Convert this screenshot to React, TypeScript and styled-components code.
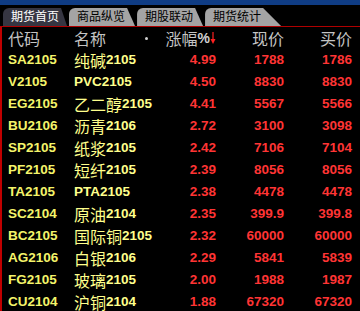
import React from "react";
import styled, { createGlobalStyle } from "styled-components";

const Global = createGlobalStyle`
  html, body { margin: 0; padding: 0; background: #000; }
  #root { width: 360px; height: 311px; overflow: hidden; }
`;

const Screen = styled.div`
  width: 360px;
  height: 311px;
  background: #000;
  display: flex;
  flex-direction: column;
  overflow: hidden;
`;

const TopStrip = styled.div`
  height: 5px;
  background: #0f3c84;
  flex: none;
`;

const TabBar = styled.div`
  height: 22px;
  box-sizing: border-box;
  padding: 3px 0 0 3px;
  display: flex;
  gap: 2px;
  border-bottom: 1px solid #b00000;
  flex: none;
`;

const Tab = styled.div<{ $active?: boolean; $slant: number }>`
  height: 18px;
  box-sizing: border-box;
  padding: 0 ${(p) => p.$slant + 2}px 3px 8px;
  display: flex;
  align-items: center;
  background: ${(p) => (p.$active ? "#363642" : "#a4a4a4")};
  color: ${(p) => (p.$active ? "#ffffff" : "#000000")};
  font-family: "Noto Sans CJK SC", sans-serif;
  font-size: 12px;
  line-height: 12px;
  border-top-left-radius: 6px;
  clip-path: polygon(0 0, calc(100% - ${(p) => p.$slant}px) 0, 100% 100%, 0 100%);
  white-space: nowrap;
`;

const Table = styled.div`
  flex: 1;
  border-left: 2px solid #c00000;
  padding-left: 6px;
  display: grid;
  grid-template-columns: 66px 80px 62px 68px 68px;
  grid-auto-rows: 22px;
  align-items: center;
`;

const HeadCell = styled.div<{ $right?: boolean }>`
  height: 22px;
  font-family: "Noto Sans CJK SC", sans-serif;
  font-size: 16px;
  line-height: 16px;
  color: #c4c4c4;
  display: flex;
  align-items: center;
  justify-content: ${(p) => (p.$right ? "flex-end" : "flex-start")};
  white-space: nowrap;
`;

const NameHead = styled(HeadCell)`
  justify-content: space-between;
  padding-right: 6px;
`;

const Dot = styled.span`
  width: 3px;
  height: 3px;
  border-radius: 50%;
  background: #d0d0d0;
`;

const Pct = styled.span`
  font-family: "Liberation Sans", Arial, sans-serif;
  font-weight: bold;
  font-size: 14px;
  line-height: 14px;
  color: #d0d0d0;
`;

const Cell = styled.div<{ $color: string; $right?: boolean }>`
  height: 22px;
  font-family: "Liberation Sans", Arial, sans-serif;
  font-weight: bold;
  font-size: 13.5px;
  line-height: 14px;
  color: ${(p) => p.$color};
  display: flex;
  align-items: center;
  justify-content: ${(p) => (p.$right ? "flex-end" : "flex-start")};
  white-space: nowrap;
`;

const Cn = styled.span`
  font-family: "Noto Sans CJK SC", sans-serif;
  font-weight: normal;
  font-size: 16px;
  line-height: 16px;
`;

const DownArrow = () => (
  <svg width="6" height="14" viewBox="0 0 6 14">
    <line x1="3" y1="1" x2="3" y2="10" stroke="#ff2020" strokeWidth="1.2" />
    <path d="M0.5 8 L3 13 L5.5 8 Z" fill="#ff2020" />
  </svg>
);

const rows: [string, string, string, string, string][] = [
  ["SA2105", "纯碱2105", "4.99", "1788", "1786"],
  ["V2105", "PVC2105", "4.50", "8830", "8830"],
  ["EG2105", "乙二醇2105", "4.41", "5567", "5566"],
  ["BU2106", "沥青2106", "2.72", "3100", "3098"],
  ["SP2105", "纸浆2105", "2.42", "7106", "7104"],
  ["PF2105", "短纤2105", "2.39", "8056", "8056"],
  ["TA2105", "PTA2105", "2.38", "4478", "4478"],
  ["SC2104", "原油2104", "2.35", "399.9", "399.8"],
  ["BC2105", "国际铜2105", "2.32", "60000", "60000"],
  ["AG2106", "白银2106", "2.29", "5841", "5839"],
  ["FG2105", "玻璃2105", "2.00", "1988", "1987"],
  ["CU2104", "沪铜2104", "1.88", "67320", "67320"],
];

const splitName = (n: string) => {
  const m = n.match(/^([^\x00-\x7f]*)(.*)$/);
  return m ? [m[1], m[2]] : ["", n];
};

const YELLOW = "#f4f46a";
const NAME = "#ffff8c";
const RED = "#ff3434";

export default function App() {
  return (
    <>
      <Global />
      <Screen>
        <TopStrip />
        <TabBar>
          <Tab $active $slant={6}>期货首页</Tab>
          <Tab $slant={8}>商品纵览</Tab>
          <Tab $slant={8}>期股联动</Tab>
          <Tab $slant={18}>期货统计</Tab>
        </TabBar>
        <Table>
          <HeadCell>代码</HeadCell>
          <NameHead>
            名称
            <Dot />
          </NameHead>
          <HeadCell $right>
            涨幅<Pct>%</Pct>
            <DownArrow />
          </HeadCell>
          <HeadCell $right>现价</HeadCell>
          <HeadCell $right>买价</HeadCell>
          {rows.map(([code, name, pct, now, buy]) => {
            const [cn, lat] = splitName(name);
            return (
              <React.Fragment key={code}>
                <Cell $color={YELLOW}>{code}</Cell>
                <Cell $color={NAME}>
                  {cn && <Cn>{cn}</Cn>}
                  <span>{lat}</span>
                </Cell>
                <Cell $color={RED} $right>{pct}</Cell>
                <Cell $color={RED} $right>{now}</Cell>
                <Cell $color={RED} $right>{buy}</Cell>
              </React.Fragment>
            );
          })}
        </Table>
      </Screen>
    </>
  );
}
